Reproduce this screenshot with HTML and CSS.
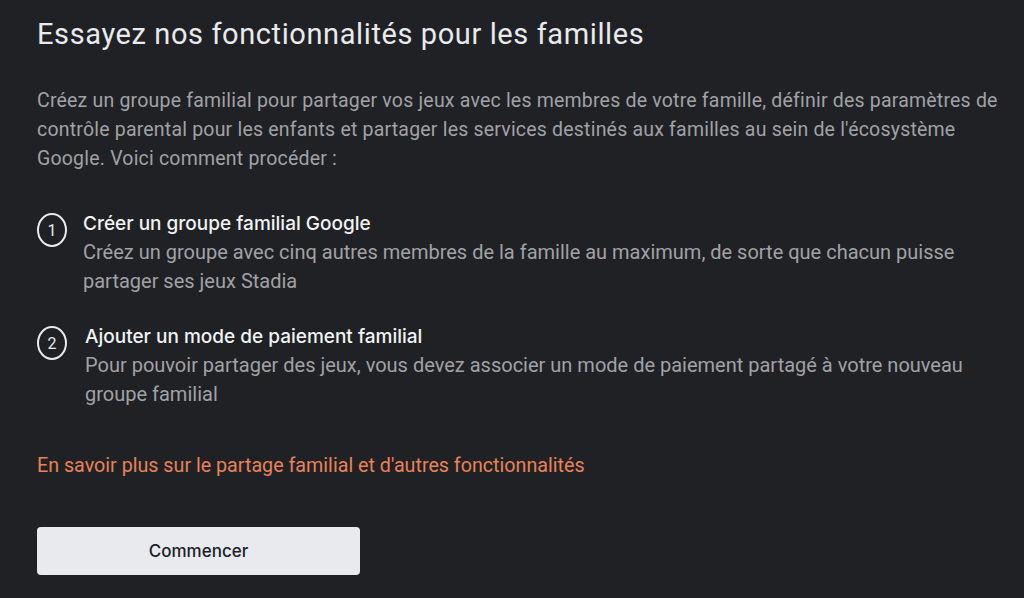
FILE: index.html
```html
<!DOCTYPE html>
<html lang="fr">
<head>
  <meta charset="UTF-8">
  <meta name="viewport" content="width=device-width, initial-scale=1.0">
  <title>Fonctionnalités pour les familles</title>
  <link rel="stylesheet" href="styles.css">
</head>
<body>
  <div class="panel">
    <h1 class="title">Essayez nos fonctionnalités pour les familles</h1>
    <p class="intro">Créez un groupe familial pour partager vos jeux avec les membres de votre famille, définir des paramètres de contrôle parental pour les enfants et partager les services destinés aux familles au sein de l'écosystème Google. Voici comment procéder :</p>

    <div class="steps">
      <div class="step">
        <div class="step-num">1</div>
        <div class="step-body">
          <div class="step-title">Créer un groupe familial Google</div>
          <div class="step-text">Créez un groupe avec cinq autres membres de la famille au maximum, de sorte que chacun puisse partager ses jeux Stadia</div>
        </div>
      </div>
      <div class="step step-2">
        <div class="step-num">2</div>
        <div class="step-body">
          <div class="step-title">Ajouter un mode de paiement familial</div>
          <div class="step-text">Pour pouvoir partager des jeux, vous devez associer un mode de paiement partagé à votre nouveau groupe familial</div>
        </div>
      </div>
    </div>

    <a class="more-link" href="#">En savoir plus sur le partage familial et d'autres fonctionnalités</a>

    <button class="start-button">Commencer</button>
  </div>
</body>
</html>
```

FILE: styles.css
```css
body {
  margin: 0;
  background: #202124;
  color: #e8eaed;
  font-family: Roboto, "Liberation Sans", sans-serif;
}
.panel {
  padding: 16px 20px 0 37px;
  display: flex;
  flex-direction: column;
  align-items: flex-start;
}
.title {
  margin: 0;
  font-size: 29px;
  line-height: 36px;
  font-weight: 400;
  letter-spacing: 0.6px;
  color: #e8eaed;
}
.intro {
  margin: 34px 0 0 0;
  font-size: 19.5px;
  line-height: 29px;
  letter-spacing: 0.2px;
  color: #a0a2a6;
}
.steps {
  margin-top: 37px;
  display: flex;
  flex-direction: column;
  gap: 27px;
}
.step {
  display: flex;
  gap: 16px;
  align-items: flex-start;
}
.step-2 {
  gap: 18px;
}
.step-num {
  flex: none;
  width: 26px;
  height: 30px;
  margin-top: 3px;
  border: 2px solid #e8eaed;
  border-radius: 50%;
  display: flex;
  align-items: center;
  justify-content: center;
  font-size: 16px;
  font-weight: 400;
}
.step-title {
  font-family: Inter, "Open Sans", sans-serif;
  font-size: 19px;
  line-height: 28px;
  font-weight: 500;
  color: #f1f3f4;
}
.step-text {
  font-size: 20px;
  line-height: 29px;
  color: #a0a2a6;
}
.more-link {
  margin-top: 42px;
  font-size: 19.7px;
  line-height: 29px;
  color: #e8825a;
  text-decoration: none;
}
.start-button {
  margin-top: 47px;
  width: 323px;
  height: 48px;
  background: #e8eaed;
  border: none;
  border-radius: 4px;
  font-family: Inter, "Open Sans", sans-serif;
  font-size: 17px;
  font-weight: 500;
  color: #202124;
  cursor: pointer;
}
```
